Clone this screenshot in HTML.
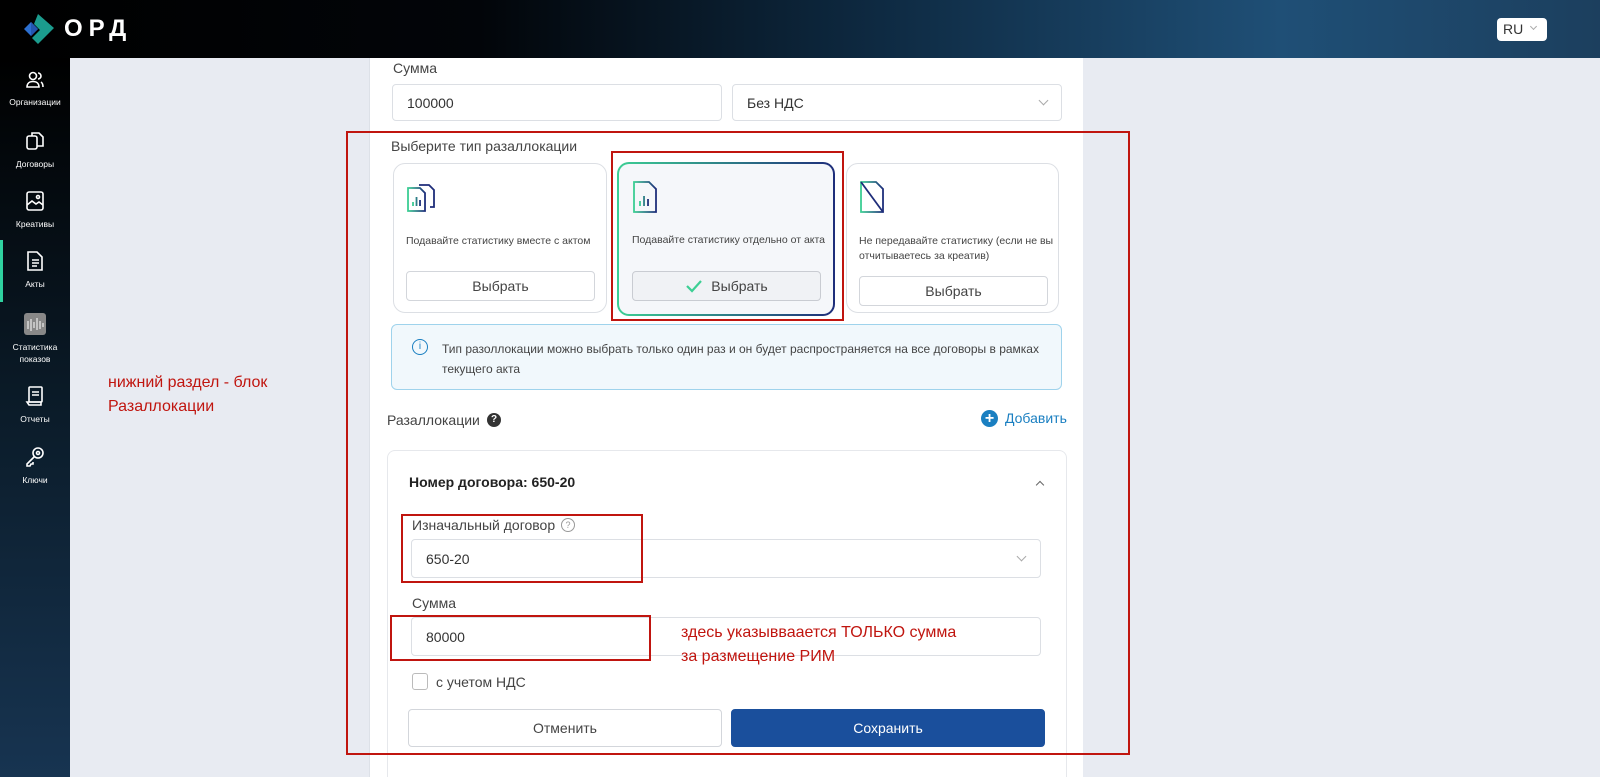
<!DOCTYPE html>
<html><head><meta charset="utf-8"><style>
*{box-sizing:border-box;margin:0;padding:0}
html{width:1600px;height:777px;overflow:hidden}
body{width:1600px;height:777px;overflow:hidden;position:relative;font-family:"Liberation Sans","Noto Sans CJK SC",sans-serif;background:#e8ebf2;color:#333}
.a{position:absolute}
.hdr{left:0;top:0;width:1600px;height:58px;background:linear-gradient(90deg,#000 0%,#020509 30%,#0e2a42 55%,#1f4f76 80%,#1c3f5e 100%)}
.side{left:0;top:58px;width:70px;height:719px;background:linear-gradient(180deg,#000 0%,#0b1c2a 50%,#173451 100%)}
.main{left:70px;top:58px;width:1530px;height:719px;background:#e8ebf2;border-top-left-radius:14px}
.nav{position:absolute;left:0;width:70px;text-align:center;color:#fff;font-size:8.5px;line-height:12px}
.nav svg{display:block;margin:0 auto 6px}
.panel{left:369px;top:58px;width:714px;height:719px;background:#fff;border-left:1px solid #dde1e8}
.inp{position:absolute;border:1px solid #dcdfe4;border-radius:4px;background:#fff;font-size:14px;color:#333;padding-left:14px;display:flex;align-items:center}
.lbl{position:absolute;font-size:14px;color:#444}
.card{position:absolute;border:1px solid #dcdfe4;border-radius:12px;background:#fff}
.ct{position:absolute;font-size:10.5px;color:#444;line-height:15px}
.btn{position:absolute;border:1px solid #d3d6db;border-radius:4px;background:#fff;font-size:14px;color:#444;display:flex;align-items:center;justify-content:center}
.red{position:absolute;border:2px solid #c0150f}
.rt{position:absolute;color:#c0150f;font-size:16px;line-height:24px}
.chev{position:absolute;width:7px;height:7px;border-right:1px solid #aaa;border-bottom:1px solid #aaa;transform:rotate(45deg)}
</style></head><body>
<div class="a hdr"></div>
<svg class="a" style="left:20px;top:12px" width="40" height="36" viewBox="0 0 40 36"><polygon points="18,2 34,16 18,32 12,26 20,18 14,12" fill="#1b9c8e"/><polygon points="4,17 11,10 18,17 11,24" fill="#2c6fd0"/><polygon points="11,10 18,17 11,24" fill="#2456b0"/></svg>
<div class="a" style="left:64px;top:15px;color:#fff;font-size:24px;font-weight:bold;letter-spacing:6px">ОРД</div>
<div class="a" style="left:1497px;top:18px;width:50px;height:23px;background:#fff;border-radius:4px;font-size:14px;color:#333;padding:3px 0 0 6px">RU</div>
<div class="chev" style="left:1531px;top:24px;width:5px;height:5px"></div>
<div class="a side"></div>
<div class="a main"></div>
<div class="a" style="left:0;top:240px;width:3px;height:62px;background:#2fd2a0"></div>
<div class="nav" style="top:70px"><svg width="20" height="20" viewBox="0 0 20 20" fill="none" stroke="#fff" stroke-width="1.6"><circle cx="8" cy="6" r="3.5"/><path d="M2 17c0-4 3-5.5 6-5.5s6 1.5 6 5.5z"/><path d="M13 3a3 3 0 0 1 0 6M16 12c1.5 1 2 3 2 5"/></svg>Организации</div>
<div class="nav" style="top:130px"><svg width="20" height="22" viewBox="0 0 20 22" fill="none" stroke="#fff" stroke-width="1.6"><rect x="2" y="6" width="10" height="13" rx="2"/><path d="M7 6V3h7l4 4v9h-6"/></svg>Договоры</div>
<div class="nav" style="top:190px"><svg width="20" height="22" viewBox="0 0 20 22" fill="none" stroke="#fff" stroke-width="1.6"><rect x="2" y="2" width="16" height="18" rx="2"/><circle cx="13" cy="7" r="1.5"/><path d="M2 15l5-4 4 3 3-2 4 3"/></svg>Креативы</div>
<div class="nav" style="top:250px"><svg width="20" height="22" viewBox="0 0 20 22" fill="none" stroke="#fff" stroke-width="1.6"><path d="M3 2h9l5 5v13H3z"/><path d="M7 10h7M7 13h7M7 16h5"/></svg>Акты</div>
<div class="nav" style="top:313px"><svg width="22" height="22" viewBox="0 0 22 22"><rect width="22" height="22" rx="3" fill="#888"/><path d="M4 8v8M7 6v12M10 9v6M13 5v12M16 8v8M19 10v4" stroke="#fff" stroke-width="1"/></svg>Статистика<br>показов</div>
<div class="nav" style="top:385px"><svg width="20" height="22" viewBox="0 0 20 22" fill="none" stroke="#fff" stroke-width="1.6"><rect x="4" y="2" width="13" height="15" rx="1"/><path d="M2 17h14v3H4zM7 7h7M7 10h7"/></svg>Отчеты</div>
<div class="nav" style="top:446px"><svg width="20" height="22" viewBox="0 0 20 22" fill="none" stroke="#fff" stroke-width="1.6"><circle cx="13" cy="7" r="5"/><circle cx="13" cy="7" r="1.5"/><path d="M9 11l-7 7v2h3l1-2h2v-2"/></svg>Ключи</div>

<div class="rt" style="left:108px;top:371px">нижний раздел - блок<br>Разаллокации</div>

<div class="a panel"></div>
<div class="lbl" style="left:393px;top:60px">Сумма</div>
<div class="inp" style="left:392px;top:84px;width:330px;height:37px">100000</div>
<div class="inp" style="left:732px;top:84px;width:330px;height:37px">Без НДС</div>
<div class="chev" style="left:1040px;top:97px"></div>

<div class="lbl" style="left:391px;top:138px">Выберите тип разаллокации</div>
<div class="card" style="left:393px;top:163px;width:214px;height:150px"></div>
<div class="a" style="left:617px;top:162px;width:218px;height:154px;border-radius:12px;padding:2px;background:linear-gradient(90deg,#3ccf94,#1e2d7a)"><div style="width:100%;height:100%;border-radius:10px;background:#f5f7fa"></div></div>
<div class="card" style="left:846px;top:163px;width:213px;height:150px"></div>
<svg class="a" style="left:405px;top:179px" width="38" height="36" viewBox="0 0 38 36" fill="none" stroke-width="1.8"><defs><linearGradient id="g" x1="0" x2="1"><stop offset="0" stop-color="#3ccf94"/><stop offset="1" stop-color="#1e2d7a"/></linearGradient></defs><path d="M14 6h10l5 5v17h-4" stroke="#1e2d7a"/><path d="M3 9h12l5 5v18H3z" stroke="url(#g)"/><path d="M8 27v-4M11.5 27v-9M15 27v-6" stroke="url(#g)"/></svg>
<svg class="a" style="left:631px;top:179px" width="30" height="36" viewBox="0 0 30 36" fill="none" stroke-width="1.8"><path d="M3 3h15l7 7v23H3z" stroke="url(#g)"/><path d="M9 27v-5M13 27v-10M17 27v-7" stroke="url(#g)"/></svg>
<svg class="a" style="left:858px;top:179px" width="30" height="36" viewBox="0 0 30 36" fill="none" stroke-width="1.8"><path d="M3 3h15l7 7v23H3z" stroke="url(#g)"/><path d="M3 3l22 30" stroke="#1e2d7a"/></svg>
<div class="ct" style="left:406px;top:234px">Подавайте статистику вместе с актом</div>
<div class="ct" style="left:632px;top:233px">Подавайте статистику отдельно от акта</div>
<div class="ct" style="left:859px;top:234px">Не передавайте статистику (если не вы<br>отчитываетесь за креатив)</div>
<div class="btn" style="left:406px;top:271px;width:189px;height:30px">Выбрать</div>
<div class="btn" style="left:632px;top:271px;width:189px;height:30px;background:#f0f2f5;border-color:#c9ccd2"><svg width="18" height="14" viewBox="0 0 18 14" style="margin-right:8px"><path d="M2 7l5 5L16 2" fill="none" stroke="#3ccf94" stroke-width="2.2"/></svg>Выбрать</div>
<div class="btn" style="left:859px;top:276px;width:189px;height:30px">Выбрать</div>
<div class="red" style="left:611px;top:151px;width:233px;height:170px"></div>

<div class="a" style="left:391px;top:324px;width:671px;height:66px;background:#f1f8fc;border:1px solid #9fd3ec;border-radius:6px"></div>
<div class="a" style="left:412px;top:339px;width:16px;height:16px;border:1.5px solid #1a7fc1;border-radius:50%;color:#1a7fc1;font-size:10px;text-align:center;line-height:13px">i</div>
<div class="ct" style="left:442px;top:339px;font-size:12px;line-height:20px;color:#444">Тип разоллокации можно выбрать только один раз и он будет распространяется на все договоры в рамках<br>текущего акта</div>

<div class="lbl" style="left:387px;top:412px">Разаллокации</div>
<div class="a" style="left:487px;top:413px;width:14px;height:14px;border-radius:50%;background:#333;color:#fff;font-size:10px;font-weight:bold;text-align:center;line-height:14px">?</div>
<div class="a" style="left:981px;top:410px;width:17px;height:17px;border-radius:50%;background:#1a7fc1;color:#fff;font-size:16px;font-weight:bold;text-align:center;line-height:17px">+</div>
<div class="a" style="left:1005px;top:410px;font-size:14px;color:#1a7fc1">Добавить</div>

<div class="a" style="left:387px;top:450px;width:680px;height:327px;border:1px solid #e6e8ec;border-bottom:none;border-radius:8px 8px 0 0;background:#fff"></div>
<div class="a" style="left:409px;top:474px;font-size:14px;font-weight:bold;color:#222">Номер договора: 650-20</div>
<div class="chev" style="left:1037px;top:482px;transform:rotate(225deg);width:6px;height:6px;border-color:#666"></div>
<div class="lbl" style="left:412px;top:517px">Изначальный договор</div>
<div class="a" style="left:561px;top:518px;width:14px;height:14px;border:1px solid #999;border-radius:50%;color:#999;font-size:9px;text-align:center;line-height:12px">?</div>
<div class="inp" style="left:411px;top:539px;width:630px;height:39px">650-20</div>
<div class="chev" style="left:1018px;top:553px"></div>
<div class="lbl" style="left:412px;top:595px">Сумма</div>
<div class="inp" style="left:411px;top:617px;width:630px;height:39px">80000</div>
<div class="a" style="left:412px;top:673px;width:16px;height:17px;border:1px solid #bbb;border-radius:3px"></div>
<div class="lbl" style="left:436px;top:674px">с учетом НДС</div>
<div class="btn" style="left:408px;top:709px;width:314px;height:38px">Отменить</div>
<div class="btn" style="left:731px;top:709px;width:314px;height:38px;background:#1a4f9c;border-color:#1a4f9c;color:#fff">Сохранить</div>

<div class="red" style="left:401px;top:514px;width:242px;height:69px"></div>
<div class="red" style="left:390px;top:615px;width:261px;height:46px"></div>
<div class="rt" style="left:681px;top:621px">здесь указывваается ТОЛЬКО сумма<br>за размещение РИМ</div>
<div class="red" style="left:346px;top:131px;width:784px;height:624px"></div>
</body></html>
